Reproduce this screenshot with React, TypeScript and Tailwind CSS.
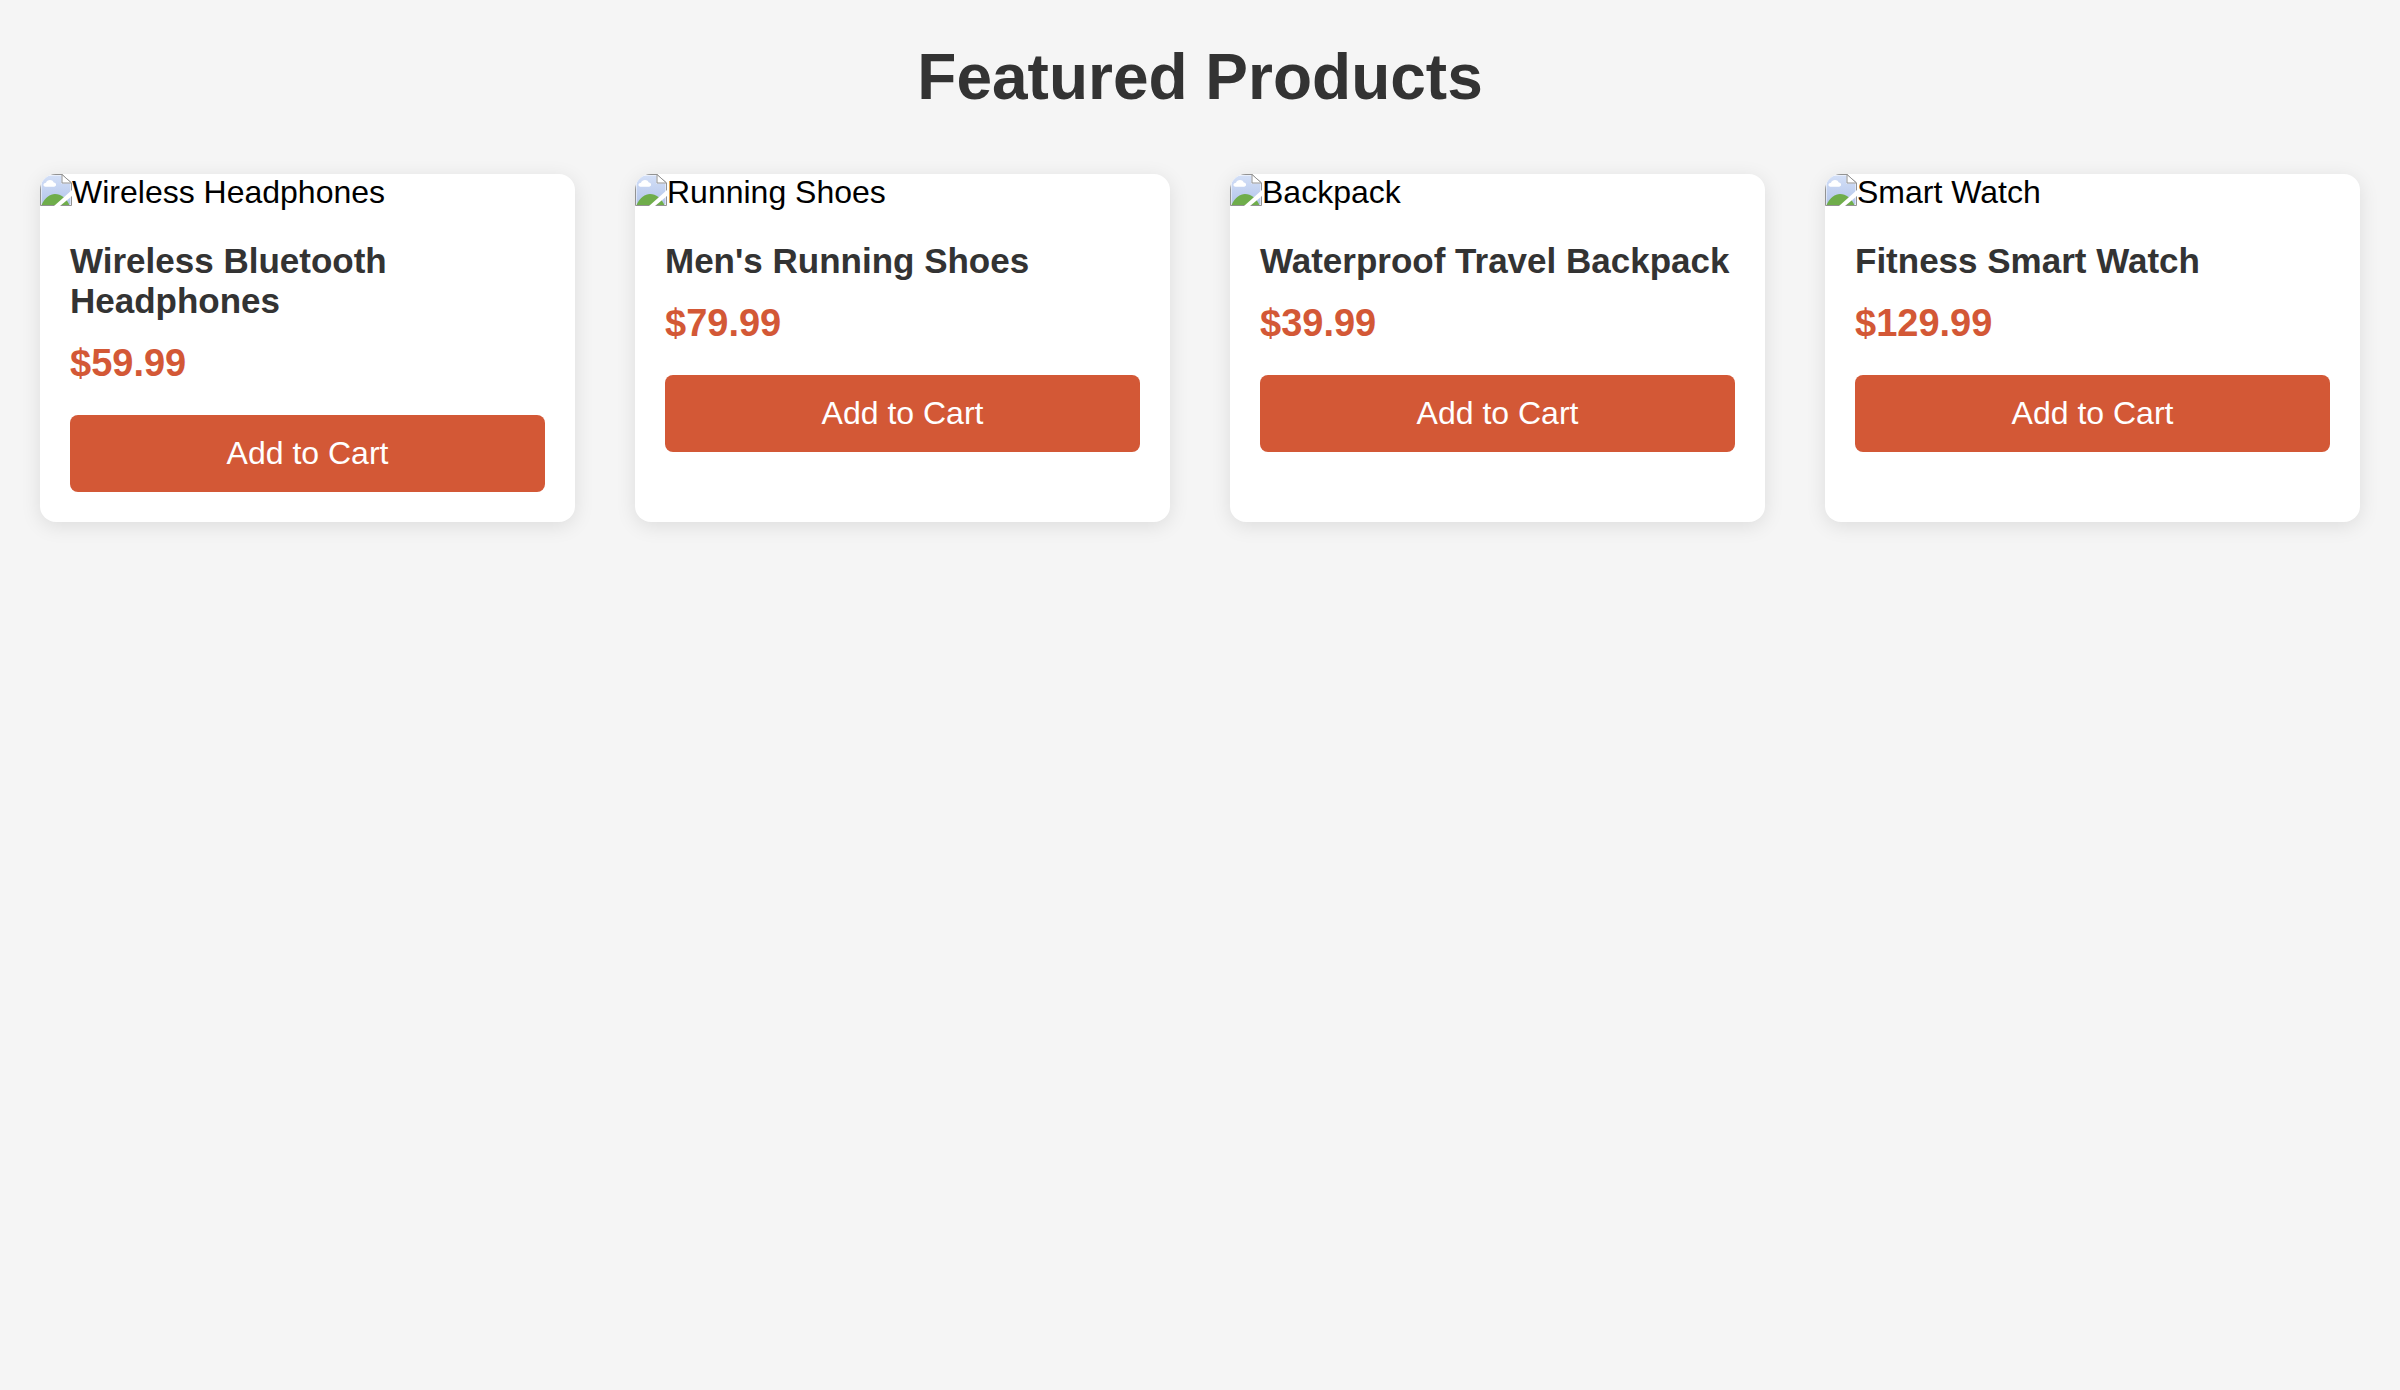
const products = [
  { alt: "Wireless Headphones", name: "Wireless Bluetooth Headphones", price: "$59.99" },
  { alt: "Running Shoes", name: "Men's Running Shoes", price: "$79.99" },
  { alt: "Backpack", name: "Waterproof Travel Backpack", price: "$39.99" },
  { alt: "Smart Watch", name: "Fitness Smart Watch", price: "$129.99" },
];

function PictureIcon() {
  return (
    <svg className="size-8 shrink-0" viewBox="0 0 32 32" aria-hidden="true">
      <defs>
        <linearGradient id="sky" x1="0" y1="0" x2="0" y2="1">
          <stop offset="0" stopColor="#d3dff7" />
          <stop offset="1" stopColor="#b3c5ea" />
        </linearGradient>
      </defs>
      <path d="M0.5 0.5H22L31.5 9V31.5H0.5Z" fill="#fff" />
      <path d="M1.5 1.5H21.5V9.5H30.5V30.5H1.5Z" fill="url(#sky)" />
      <path d="M5.5 12.7C2.7 12.7 2.7 9 6 8.8C7 5.4 12.5 5 13.8 8.6C17 9 16.7 12.7 14 12.7Z" fill="#fff" />
      <path d="M1.5 31C5 23.5 10 20 15 20C21 20 26.500 24.500 29.500 31Z" fill="#6fad4b" />
      <path d="M0.5 0.5H22L31.5 9V31.5H0.5Z" fill="none" stroke="#929292" />
      <path d="M22 0.5V9H31.5Z" fill="#fff" stroke="#929292" />
      <path d="M32 16L14 32H20L32 22Z" fill="#fff" />
    </svg>
  );
}

export default function App() {
  return (
    <div className="min-h-screen bg-[#f5f5f5] p-10 font-['Liberation_Sans',Arial,sans-serif]">
      <h1 className="mb-[60px] text-center text-[64px] leading-[74px] font-bold text-[#333]">
        Featured Products
      </h1>
      <main className="grid grid-cols-4 gap-[60px]">
        {products.map((p) => (
          <article key={p.name} className="overflow-hidden rounded-2xl bg-white shadow-[0_4px_20px_rgba(0,0,0,0.1)]">
            <div className="flex text-[32px] leading-[37px] text-black">
              <PictureIcon />
              {p.alt}
            </div>
            <div className="p-[30px]">
              <h2 className="mb-5 text-[35px] leading-10 font-bold text-[#333]">{p.name}</h2>
              <p className="mb-[30px] text-[38px] leading-[44px] font-bold text-[#d35836]">{p.price}</p>
              <button type="button" className="w-full rounded-lg bg-[#d35836] py-5 text-[32px] leading-[37px] text-white">
                Add to Cart
              </button>
            </div>
          </article>
        ))}
      </main>
    </div>
  );
}
